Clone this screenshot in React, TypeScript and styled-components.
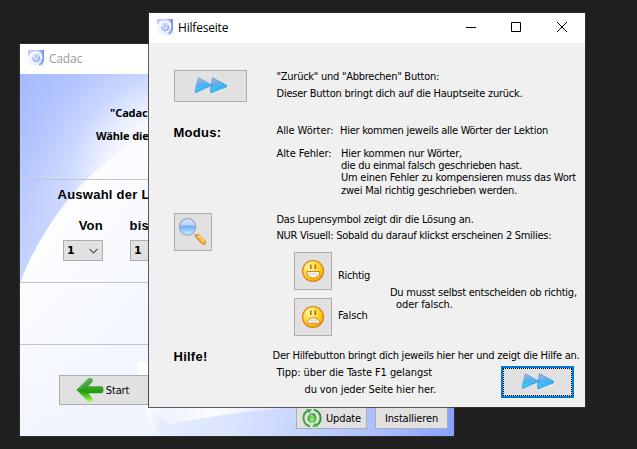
import React from "react";
import styled, { createGlobalStyle, css } from "styled-components";

const UI_FONT = `"DejaVu Sans Condensed", "DejaVu Sans", sans-serif`;

const GlobalStyle = createGlobalStyle`
  body { margin: 0; background: #1f1f1f; overflow: hidden; }
  * { box-sizing: border-box; }
  svg { display: block; flex: none; }
`;

const Desktop = styled.main`
  position: relative;
  width: 637px;
  height: 449px;
  overflow: hidden;
  background: #1f1f1f;
  color: #000;
  font: 11px/14px ${UI_FONT};
`;

const Window = styled.section`
  position: absolute;
  display: flex;
  flex-direction: column;
  border: 1px solid rgba(50, 50, 50, 0.8);
  background-clip: padding-box;
  overflow: hidden;
`;

const MainWindow = styled(Window)`
  left: 19px;
  top: 43px;
  width: 436px;
  height: 394px;
`;

const HelpWindow = styled(Window)`
  left: 148px;
  top: 12px;
  width: 438px;
  height: 396px;
  background-color: #f0f0f0;
`;

const TitleBar = styled.header<{ $inactive?: boolean }>`
  display: flex;
  align-items: center;
  flex: none;
  height: 30px;
  padding: 0 18px 2px 8px;
  background: #fff;
  color: ${(p) => (p.$inactive ? "#999" : "#000")};
`;

const Title = styled.h1`
  flex: 1;
  margin: 2px 0 0 5px;
  font: 12px/16px "Open Sans", sans-serif;
  letter-spacing: -0.2px;
`;

const WindowControls = styled.div`
  display: grid;
  grid-template-columns: 45px 46px 10px;
`;

/* ---------- main window ---------- */

const MainBody = styled.div`
  position: relative;
  flex: 1;
  display: grid;
  grid-template-rows: 106px 103px 62px 1fr;
`;

const Backdrop = styled.svg`
  position: absolute;
  inset: 0;
  width: 100%;
  height: 100%;
`;

const Panel = styled.div`
  position: relative;
  border-bottom: 1px solid #c4c4c4;
  white-space: nowrap;
  &:last-child { border-bottom: 0; }
`;

const Intro = styled(Panel)`
  display: flex;
  flex-direction: column;
  gap: 7px;
  padding: 31px 0 0 76px;
  font: bold 11px/16px "Noto Sans", sans-serif;
  letter-spacing: -0.1px;
`;

const IntroTitle = styled.div`
  padding-left: 14px;
`;

const Heading = styled.h2<{ $top?: number }>`
  margin: ${(p) => p.$top ?? 0}px 0 0 -0.5px;
  font: bold 13px/16px "Liberation Sans", sans-serif;
  letter-spacing: 0.25px;
`;

const LessonPanel = styled(Panel)`
  padding: 7px 0 0 38px;
`;

const Ranges = styled.div`
  display: flex;
  gap: 27px;
  margin: 15px 0 0 5px;
`;

const Range = styled.label<{ $align: string }>`
  display: flex;
  flex-direction: column;
  align-items: ${(p) => p.$align};
  gap: 6px;
  width: 40px;
`;

const Combo = styled.span`
  display: flex;
  align-items: center;
  justify-content: space-between;
  align-self: stretch;
  height: 21px;
  padding: 0 4px 0 3px;
  border: 1px solid #adadad;
  background: #e1e1e1;
  font: bold 11px/12px "DejaVu Sans", sans-serif;
`;

const ActionPanel = styled(Panel)`
  display: flex;
  align-items: flex-start;
  padding: 30px 6px 7px 39px;
`;

const Button = styled.button`
  display: flex;
  align-items: center;
  justify-content: center;
  flex: none;
  margin: 0;
  padding: 0;
  border: 1px solid #adadad;
  background: #e1e1e1;
  color: #000;
  font: inherit;
  letter-spacing: -0.15px;
`;

const ButtonLabel = styled.span`
  padding-top: 2px;
`;

const StartButton = styled(Button)`
  width: 90px;
  height: 30px;
  padding-right: 3px;
  gap: 2px;
`;

const FooterButton = styled(Button)<{ $left: number; $width: number }>`
  align-self: flex-end;
  width: ${(p) => p.$width}px;
  height: 23px;
  margin-left: ${(p) => p.$left}px;
  gap: 4px;
`;

/* ---------- help window ---------- */

const HelpBody = styled.div`
  display: grid;
  grid-template-rows: 75px 90px 136px 1fr;
`;

const HelpSection = styled.div`
  display: grid;
  grid-template-columns: 102.5px 1fr;
  align-items: start;
  padding-left: 25px;
`;

const HelpText = styled.div<{ $top: number }>`
  padding-top: ${(p) => p.$top}px;
`;

const Line = styled.p<{ $ls: number; $gap?: number; $indent?: number; $cover?: boolean }>`
  position: relative;
  height: 12px;
  margin: ${(p) => p.$gap ?? 0}px 0 0 ${(p) => p.$indent ?? 0}px;
  white-space: pre;
  letter-spacing: ${(p) => p.$ls}px;
  ${(p) => p.$cover && css`background: #f0f0f0;`}
`;

const Definition = styled.div<{ $gap?: number; $term: number }>`
  display: grid;
  grid-template-columns: ${(p) => p.$term}px 1fr;
  margin-top: ${(p) => p.$gap ?? 0}px;
`;

const WideButton = styled(Button)<{ $top?: number }>`
  width: 73px;
  height: 32px;
  margin-top: ${(p) => p.$top ?? 0}px;
`;

const FocusedButton = styled(WideButton)`
  margin-left: auto;
  margin-right: 11px;
  border: 2px solid #0078d7;
  position: relative;
  &::after {
    content: "";
    position: absolute;
    inset: 0;
    border: 1px dotted #000;
  }
`;

const IconButton = styled(Button)<{ $top?: number }>`
  width: 38px;
  height: 38px;
  margin-top: ${(p) => p.$top ?? 0}px;
`;

const Smilies = styled.div`
  display: flex;
  margin: 11px 0 0 17.5px;
`;

const SmileyList = styled.div`
  display: grid;
  gap: 8px;
  width: 96px;
`;

const SmileyRow = styled.div`
  display: flex;
  gap: 6px;
`;

const TipRow = styled.div`
  display: flex;
  align-items: flex-start;
  margin-top: 5px;
`;

/* ---------- drawings ---------- */

const SwirlIcon = ({ id }: { id: string }) => (
  <svg width="16" height="16" viewBox="0 0 16 16">
    <defs>
      <linearGradient id={id} x1="0" y1="1" x2="1" y2="0">
        <stop offset="0" stopColor="#ffffff" />
        <stop offset=".5" stopColor="#dfe7ff" />
        <stop offset=".8" stopColor="#b4c7fd" />
        <stop offset="1" stopColor="#5178f5" />
      </linearGradient>
    </defs>
    <path d="M0 0H16V16H0Z" fill={`url(#${id})`} />
    <path d="M0 0H7Q2 2 0 6Z" fill="#b9c9ff" />
    <path d="M1.500 10C1.500 4.500 5 2 9 2.500C12 3 13.500 5.500 13 9" fill="none" stroke="#fff" strokeWidth="2" opacity=".85" />
    <path d="M5 7.500C5 10 6.500 11.500 8.500 11.300C11.500 11 12 8.500 11 6.500" fill="none" stroke="#7f9df0" strokeWidth="1.400" opacity=".8" />
    <path d="M7 5.500Q9 7 8 9" fill="none" stroke="#8fa9f0" strokeWidth="1.200" opacity=".8" />
    <path d="M15.300 0V9C15 12 14 13.500 11.500 15" fill="none" stroke="#6f91fa" strokeWidth="1.400" />
  </svg>
);

const ForwardIcon = ({ id }: { id: string }) => (
  <svg width="34" height="18" viewBox="0 0 34 18">
    <defs>
      <linearGradient id={id} x1="0" y1="0" x2="0.15" y2="1">
        <stop offset="0" stopColor="#b0c0e6" />
        <stop offset=".42" stopColor="#6aabe6" />
        <stop offset=".58" stopColor="#3fb4f6" />
        <stop offset=".8" stopColor="#3bdcff" />
        <stop offset="1" stopColor="#2aa5ee" />
      </linearGradient>
    </defs>
    <path d="M5 1.500L18 8L2 17V13.500Z" fill="#fff" opacity=".65" />
    <path d="M4.500 .8L18 8.200L1.500 16L1.200 13Z" fill={`url(#${id})`} stroke="#5793d6" strokeWidth=".7" strokeLinejoin="round" />
    <path d="M2.500 13.300L17 8.300" stroke="#2f93dc" strokeWidth=".6" />
    <path d="M19 2L33.500 9V11.500L17.500 17Z" fill="#fff" opacity=".65" />
    <path d="M18.500 .8L32.500 8.200V10L17 16L16.600 13Z" fill={`url(#${id})`} stroke="#4385cf" strokeWidth=".7" strokeLinejoin="round" />
    <path d="M17.500 13L32 9" stroke="#2388da" strokeWidth=".6" />
  </svg>
);

const MagnifierIcon = () => (
  <svg width="30" height="30" viewBox="0 0 30 30">
    <defs>
      <linearGradient id="lens" x1="0" y1="0" x2="0" y2="1">
        <stop offset="0" stopColor="#cbdcfa" />
        <stop offset=".35" stopColor="#9fc8fb" />
        <stop offset=".5" stopColor="#6faef6" />
        <stop offset=".8" stopColor="#a5dcff" />
        <stop offset="1" stopColor="#c8f0ff" />
      </linearGradient>
    </defs>
    <path d="M16.500 17.500L19 20" stroke="#a4a4ac" strokeWidth="2" />
    <circle cx="9.600" cy="9.800" r="8.300" fill="url(#lens)" stroke="#a3abc0" strokeWidth="1.300" />
    <path d="M2.700 9C4 4 7 2.600 10 2.600S15.500 4 17 9Q10 6.500 2.700 9Z" fill="#dfe8fd" opacity=".55" />
    <path d="M19.800 19.500L25.800 25.500" stroke="#c5802a" strokeWidth="4.600" strokeLinecap="round" />
    <path d="M19.800 19.300L25.800 25.300" stroke="#f8b62d" strokeWidth="3.200" strokeLinecap="round" />
    <path d="M20.500 18.800L26.200 24.300" stroke="#ffe58a" strokeWidth="1.200" />
  </svg>
);

const SmileyIcon = ({ id, sad }: { id: string; sad?: boolean }) => (
  <svg width="24" height="24" viewBox="0 0 24 24">
    <defs>
      <radialGradient id={id} cx=".35" cy=".3" r=".75">
        <stop offset="0" stopColor="#fff9b0" />
        <stop offset=".4" stopColor="#ffe04b" />
        <stop offset=".8" stopColor="#ffc400" />
        <stop offset="1" stopColor="#f79a10" />
      </radialGradient>
    </defs>
    <circle cx="12" cy="12" r="10.500" fill={`url(#${id})`} stroke="#db7e1d" strokeWidth="1.200" />
    <path d="M9.800 5.500V10M14.300 5.500V10" stroke="#a6671a" strokeWidth="1.500" />
    {sad ? (
      <path d="M6.500 19C6 15 9 12.800 12.500 12.800S19 15 18.500 19C16.500 18.500 14.500 18.300 12.500 18.300S8.500 18.500 6.500 19Z" fill="#f6f2ec" stroke="#cf8430" strokeWidth=".9" />
    ) : (
      <path d="M5.800 12.500H18.800C18.600 17 16 19 12.300 19S6 17 5.800 12.500Z" fill="#faf7f0" stroke="#c8781f" strokeWidth=".9" />
    )}
    <path
      d={sad ? "M8 15.800H17M10 14V18M12.500 13.500V18M15 14V18" : "M6.800 15.500H18M9.300 13V18M12.300 13V18.500M15.300 13V18"}
      stroke="#cfcaca"
      strokeWidth=".5"
    />
  </svg>
);

const ArrowIcon = () => (
  <svg width="28" height="26" viewBox="0 0 28 26">
    <defs>
      <linearGradient id="arrow" x1="0" y1="0" x2="0" y2="1">
        <stop offset="0" stopColor="#5aa955" />
        <stop offset=".35" stopColor="#3da234" />
        <stop offset=".55" stopColor="#22a00f" />
        <stop offset=".8" stopColor="#65d92e" />
        <stop offset="1" stopColor="#c4ff8c" />
      </linearGradient>
    </defs>
    <path d="M.5 12.800L12.500 1.200Q17 .2 16.800 4.200L12.500 9.200H25.500Q27.500 9.500 27.500 12.800T25.500 16.300H12.500L16.500 22Q16.800 26 12.800 25.500Z" fill="url(#arrow)" />
    <path d="M3 12.500L13 3" stroke="#89c888" strokeWidth="1" opacity=".6" />
    <path d="M9 15.500H26" stroke="#168a0a" strokeWidth="1" opacity=".5" />
  </svg>
);

const UpdateIcon = () => (
  <svg width="20" height="20" viewBox="0 0 20 20">
    <defs>
      <radialGradient id="core" cx=".5" cy=".65" r=".6">
        <stop offset="0" stopColor="#a5f080" />
        <stop offset="1" stopColor="#229a25" />
      </radialGradient>
    </defs>
    <path d="M8 18.300A8.500 8.500 0 0 1 5.500 2.800" fill="none" stroke="#3fa53e" strokeWidth="2" />
    <path d="M12 1.700A8.500 8.500 0 0 1 14.500 17.200" fill="none" stroke="#2e9a31" strokeWidth="2" />
    <path d="M4 1L10 1.200L7 5.500Z" fill="#47ac48" />
    <path d="M16 19L10 18.800L13 14.500Z" fill="#4dbb3b" />
    <path d="M6 8L9 5.500H12.500L14.500 9L14 13L11.500 14.500H7.500L5.300 11.500Z" fill="url(#core)" />
    <path d="M8 8.300L10 7.200L11.500 8.800" fill="none" stroke="#d9f5cf" strokeWidth="1" />
  </svg>
);

const ChevronIcon = () => (
  <svg width="9" height="6" viewBox="0 0 9 6">
    <path d="M.5 .8L4.500 4.800L8.500 .8" fill="none" stroke="#555" strokeWidth="1.200" />
  </svg>
);

const SwirlBackdrop = () => (
  <Backdrop viewBox="0 0 434 362" preserveAspectRatio="none">
    <defs>
      <radialGradient id="sky" gradientUnits="userSpaceOnUse" cx="160" cy="110" r="200">
        <stop offset="0" stopColor="#ffffff" />
        <stop offset=".3" stopColor="#fdfdff" />
        <stop offset=".42" stopColor="#e9eeff" />
        <stop offset=".56" stopColor="#c9d6ff" />
        <stop offset=".75" stopColor="#b2c4ff" />
        <stop offset="1" stopColor="#a3b9ff" />
      </radialGradient>
      <linearGradient id="haze" x1="0" y1="0" x2="0" y2="1">
        <stop offset="0" stopColor="#e6ecff" stopOpacity="0" />
        <stop offset="1" stopColor="#dde5ff" stopOpacity=".6" />
      </linearGradient>
      <linearGradient id="disc" gradientUnits="userSpaceOnUse" x1="20" y1="140" x2="140" y2="230">
        <stop offset="0" stopColor="#fefeff" />
        <stop offset=".5" stopColor="#f8faff" />
        <stop offset="1" stopColor="#f2f6ff" />
      </linearGradient>
      <linearGradient id="low" x1="0" y1="0" x2="0" y2="1">
        <stop offset="0" stopColor="#f6f8ff" stopOpacity="0" />
        <stop offset="1" stopColor="#f0f4ff" />
      </linearGradient>
      <linearGradient id="floor" gradientUnits="userSpaceOnUse" x1="126" y1="330" x2="434" y2="362">
        <stop offset="0" stopColor="#ffffff" />
        <stop offset=".06" stopColor="#e6ecff" />
        <stop offset=".28" stopColor="#dbe4ff" />
        <stop offset=".5" stopColor="#c6d4ff" />
        <stop offset=".8" stopColor="#a5baff" />
        <stop offset="1" stopColor="#86a0fd" />
      </linearGradient>
      <linearGradient id="gleam" x1="0" y1="0" x2="1" y2="0">
        <stop offset="0" stopColor="#fff" stopOpacity=".3" />
        <stop offset=".4" stopColor="#fff" stopOpacity=".9" />
        <stop offset="1" stopColor="#fff" stopOpacity="0" />
      </linearGradient>
    </defs>
    <path d="M0 0H434V362H0Z" fill="url(#sky)" />
    <path d="M0 60H140V215H0Z" fill="url(#haze)" />
    <path d="M0 209C10 182 24 158 40 136C58 112 74 97 94 82C108 72 122 66 140 60H434V362H0Z" fill="url(#disc)" />
    <path d="M0 230H140V362H0Z" fill="url(#low)" opacity=".7" />
    <path d="M117 289Q124 285 130 292H434V362H134C128 340 119 315 117 289Z" fill="url(#floor)" />
    <path d="M129 333H290Q220 336 150 350Z" fill="url(#gleam)" />
  </Backdrop>
);

export default function App() {
  return (
    <>
      <GlobalStyle />
      <Desktop>
        <MainWindow>
          <TitleBar $inactive>
            <SwirlIcon id="swirlMain" />
            <Title>Cadac</Title>
          </TitleBar>
          <MainBody>
            <SwirlBackdrop />
            <Intro>
              <IntroTitle>"Cadac</IntroTitle>
              <div>Wähle die</div>
            </Intro>
            <LessonPanel>
              <Heading>Auswahl der L</Heading>
              <Ranges>
                <Range $align="flex-end">
                  <Heading>Von</Heading>
                  <Combo>1<ChevronIcon /></Combo>
                </Range>
                <Range $align="flex-start">
                  <Heading>bis</Heading>
                  <Combo>1</Combo>
                </Range>
              </Ranges>
            </LessonPanel>
            <Panel />
            <ActionPanel>
              <StartButton><ArrowIcon /><ButtonLabel>Start</ButtonLabel></StartButton>
              <FooterButton $left={147} $width={71}><UpdateIcon /><ButtonLabel>Update</ButtonLabel></FooterButton>
              <FooterButton $left={8} $width={73}><ButtonLabel>Installieren</ButtonLabel></FooterButton>
            </ActionPanel>
          </MainBody>
        </MainWindow>

        <HelpWindow>
          <TitleBar>
            <SwirlIcon id="swirlHelp" />
            <Title>Hilfeseite</Title>
            <WindowControls>
              <svg width="10" height="10" viewBox="0 0 10 10"><path d="M0 5.500H10" stroke="#000" /></svg>
              <svg width="10" height="10" viewBox="0 0 10 10"><path d="M.5 .5H9.500V9.500H.5Z" fill="none" stroke="#000" /></svg>
              <svg width="10" height="10" viewBox="0 0 10 10"><path d="M0 0L10 10M10 0L0 10" stroke="#000" /></svg>
            </WindowControls>
          </TitleBar>
          <HelpBody>
            <HelpSection>
              <WideButton $top={27}><ForwardIcon id="fwdTop" /></WideButton>
              <HelpText $top={27}>
                <Line $ls={-0.26}>"Zurück" und "Abbrechen" Button:</Line>
                <Line $ls={-0.235} $gap={5}>Dieser Button bringt dich auf die Hauptseite zurück.</Line>
              </HelpText>
            </HelpSection>

            <HelpSection>
              <Heading $top={7}>Modus:</Heading>
              <HelpText $top={6}>
                <Definition $term={63.5}>
                  <Line $ls={-0.08}>Alle Wörter:</Line>
                  <Line $ls={-0.265}>Hier kommen jeweils alle Wörter der Lektion</Line>
                </Definition>
                <Definition $term={64.5} $gap={11}>
                  <Line $ls={-0.09}>Alte Fehler:</Line>
                  <div>
                    <Line $ls={-0.21}>Hier kommen nur Wörter,</Line>
                    <Line $ls={-0.274}>die du einmal falsch geschrieben hast.</Line>
                    <Line $ls={-0.22} $cover>Um einen Fehler zu kompensieren muss das Wort</Line>
                    <Line $ls={-0.225} $gap={1}>zwei Mal richtig geschrieben werden.</Line>
                  </div>
                </Definition>
              </HelpText>
            </HelpSection>

            <HelpSection>
              <IconButton $top={5}><MagnifierIcon /></IconButton>
              <HelpText $top={5}>
                <Line $ls={-0.2475}>Das Lupensymbol zeigt dir die Lösung an.</Line>
                <Line $ls={-0.29} $gap={4}>NUR Visuell: Sobald du darauf klickst erscheinen 2 Smilies:</Line>
                <Smilies>
                  <SmileyList>
                    <SmileyRow>
                      <IconButton><SmileyIcon id="happy" /></IconButton>
                      <Line $ls={-0.33} $gap={17}>Richtig</Line>
                    </SmileyRow>
                    <SmileyRow>
                      <IconButton><SmileyIcon id="sad" sad /></IconButton>
                      <Line $ls={-0.1} $gap={11}>Falsch</Line>
                    </SmileyRow>
                  </SmileyList>
                  <div>
                    <Line $ls={-0.25} $gap={34}>Du musst selbst entscheiden ob richtig,</Line>
                    <Line $ls={-0.1} $indent={6}>oder falsch.</Line>
                  </div>
                </Smilies>
              </HelpText>
            </HelpSection>

            <HelpSection>
              <Heading $top={5}>Hilfe!</Heading>
              <HelpText $top={5}>
                <Line $ls={-0.238} $indent={-4}>Der Hilfebutton bringt dich jeweils hier her und zeigt die Hilfe an.</Line>
                <TipRow>
                  <div>
                    <Line $ls={-0.08}>Tipp: über die Taste F1 gelangst</Line>
                    <Line $ls={-0.11} $gap={5} $indent={28}>du von jeder Seite hier her.</Line>
                  </div>
                  <FocusedButton><ForwardIcon id="fwdOk" /></FocusedButton>
                </TipRow>
              </HelpText>
            </HelpSection>
          </HelpBody>
        </HelpWindow>
      </Desktop>
    </>
  );
}
